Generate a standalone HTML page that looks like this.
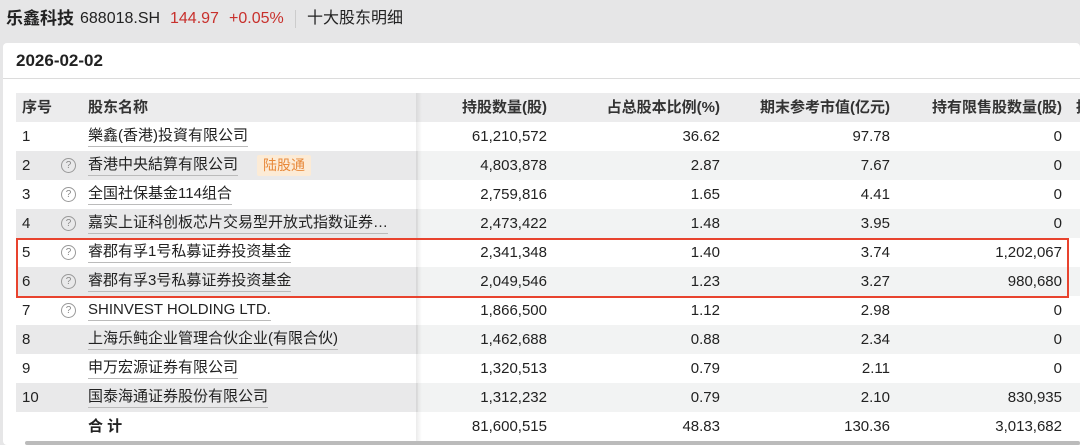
<!DOCTYPE html>
<html><head><meta charset="utf-8"><style>
*{margin:0;padding:0;box-sizing:border-box}
body{width:1080px;height:445px;background:#e6e6e7;font-family:"Liberation Sans","Noto Sans CJK SC",sans-serif;color:#222;position:relative;overflow:hidden}
.abs{position:absolute;white-space:nowrap}
.top{top:8px;font-size:16px;line-height:22px}
.panel{position:absolute;left:3px;top:43px;width:1077px;height:402px;background:#fff;border-radius:4px}
.datebar{position:absolute;left:3px;top:78px;width:1077px;height:1px;background:#dcdcdc}
.row{position:absolute;left:16px;width:1064px;height:29px;font-size:15px;line-height:29px;white-space:nowrap}
.row.g{background:#f2f3f3}
.row.g .lft{background:#e9e9ea}
.lft{position:absolute;left:0;top:0;width:402px;height:29px}
.c{position:absolute;top:0}
.r{text-align:right}
.a{right:533px}.b{right:360px}.d{right:190px}.e{right:18px}
.u{border-bottom:1px solid #bbb;line-height:20px;top:4px}
.q{position:absolute;left:45px;top:7px;width:15px;height:15px;border:1px solid #999;border-radius:50%;font-size:10px;line-height:13px;text-align:center;color:#888}
.hdr{background:#ececed;font-weight:bold;color:#333}
.hdr .lft{background:#ececed}
.shadow{position:absolute;left:416px;top:93px;width:6px;height:348px;background:linear-gradient(to right,rgba(0,0,0,0.08),rgba(0,0,0,0))}
</style></head><body>
<div class="abs top" style="left:6px;font-weight:bold;font-size:17px">乐鑫科技</div>
<div class="abs top" style="left:80px">688018.SH</div>
<div class="abs top" style="left:170px;color:#c8302c">144.97</div>
<div class="abs top" style="left:229px;color:#c8302c">+0.05%</div>
<div class="abs" style="left:295px;top:10px;width:1px;height:18px;background:#ccc"></div>
<div class="abs top" style="left:307px">十大股东明细</div>
<div class="panel"></div>
<div class="abs" style="left:16px;top:50px;font-size:17px;font-weight:bold;line-height:22px">2026-02-02</div>
<div class="datebar"></div>

<div class="row hdr" style="top:93px"><div class="lft"></div>
<span class="c" style="left:6px">序号</span><span class="c" style="left:72px">股东名称</span>
<span class="c r a">持股数量(股)</span><span class="c r b">占总股本比例(%)</span>
<span class="c r d">期末参考市值(亿元)</span><span class="c r e">持有限售股数量(股)</span><span class="c" style="left:1060px">持</span>
</div>

<div class="row" style="top:122px"><div class="lft"></div><span class="c" style="left:6px">1</span><span class="c u" style="left:72px">樂鑫(香港)投資有限公司</span><span class="c r a">61,210,572</span><span class="c r b">36.62</span><span class="c r d">97.78</span><span class="c r e">0</span></div>
<div class="row g" style="top:151px"><div class="lft"></div><span class="c" style="left:6px">2</span><span class="q">?</span><span class="c u" style="left:72px">香港中央結算有限公司</span><span class="c" style="left:241px;top:4px;height:21px;line-height:21px;padding:0 6px;background:#fcebd6;color:#e8893a;font-size:14px;border-radius:2px">陆股通</span><span class="c r a">4,803,878</span><span class="c r b">2.87</span><span class="c r d">7.67</span><span class="c r e">0</span></div>
<div class="row" style="top:180px"><div class="lft"></div><span class="c" style="left:6px">3</span><span class="q">?</span><span class="c u" style="left:72px">全国社保基金114组合</span><span class="c r a">2,759,816</span><span class="c r b">1.65</span><span class="c r d">4.41</span><span class="c r e">0</span></div>
<div class="row g" style="top:209px"><div class="lft"></div><span class="c" style="left:6px">4</span><span class="q">?</span><span class="c u" style="left:72px">嘉实上证科创板芯片交易型开放式指数证券…</span><span class="c r a">2,473,422</span><span class="c r b">1.48</span><span class="c r d">3.95</span><span class="c r e">0</span></div>
<div class="row" style="top:238px"><div class="lft"></div><span class="c" style="left:6px">5</span><span class="q">?</span><span class="c u" style="left:72px">睿郡有孚1号私募证券投资基金</span><span class="c r a">2,341,348</span><span class="c r b">1.40</span><span class="c r d">3.74</span><span class="c r e">1,202,067</span></div>
<div class="row g" style="top:267px"><div class="lft"></div><span class="c" style="left:6px">6</span><span class="q">?</span><span class="c u" style="left:72px">睿郡有孚3号私募证券投资基金</span><span class="c r a">2,049,546</span><span class="c r b">1.23</span><span class="c r d">3.27</span><span class="c r e">980,680</span></div>
<div class="row" style="top:296px"><div class="lft"></div><span class="c" style="left:6px">7</span><span class="q">?</span><span class="c u" style="left:72px">SHINVEST HOLDING LTD.</span><span class="c r a">1,866,500</span><span class="c r b">1.12</span><span class="c r d">2.98</span><span class="c r e">0</span></div>
<div class="row g" style="top:325px"><div class="lft"></div><span class="c" style="left:6px">8</span><span class="c u" style="left:72px">上海乐鲀企业管理合伙企业(有限合伙)</span><span class="c r a">1,462,688</span><span class="c r b">0.88</span><span class="c r d">2.34</span><span class="c r e">0</span></div>
<div class="row" style="top:354px"><div class="lft"></div><span class="c" style="left:6px">9</span><span class="c u" style="left:72px">申万宏源证券有限公司</span><span class="c r a">1,320,513</span><span class="c r b">0.79</span><span class="c r d">2.11</span><span class="c r e">0</span></div>
<div class="row g" style="top:383px"><div class="lft"></div><span class="c" style="left:6px">10</span><span class="c u" style="left:72px">国泰海通证券股份有限公司</span><span class="c r a">1,312,232</span><span class="c r b">0.79</span><span class="c r d">2.10</span><span class="c r e">830,935</span></div>
<div class="row" style="top:412px"><div class="lft"></div><span class="c" style="left:72px;font-weight:bold">合 计</span><span class="c r a">81,600,515</span><span class="c r b">48.83</span><span class="c r d">130.36</span><span class="c r e">3,013,682</span></div>

<div class="shadow"></div>
<div class="abs" style="left:16px;top:238px;width:1053px;height:60px;border:2px solid #e8432e"></div>
<div class="abs" style="left:25px;top:441px;width:1055px;height:4px;background:#bbb;border-radius:2px"></div>
</body></html>
